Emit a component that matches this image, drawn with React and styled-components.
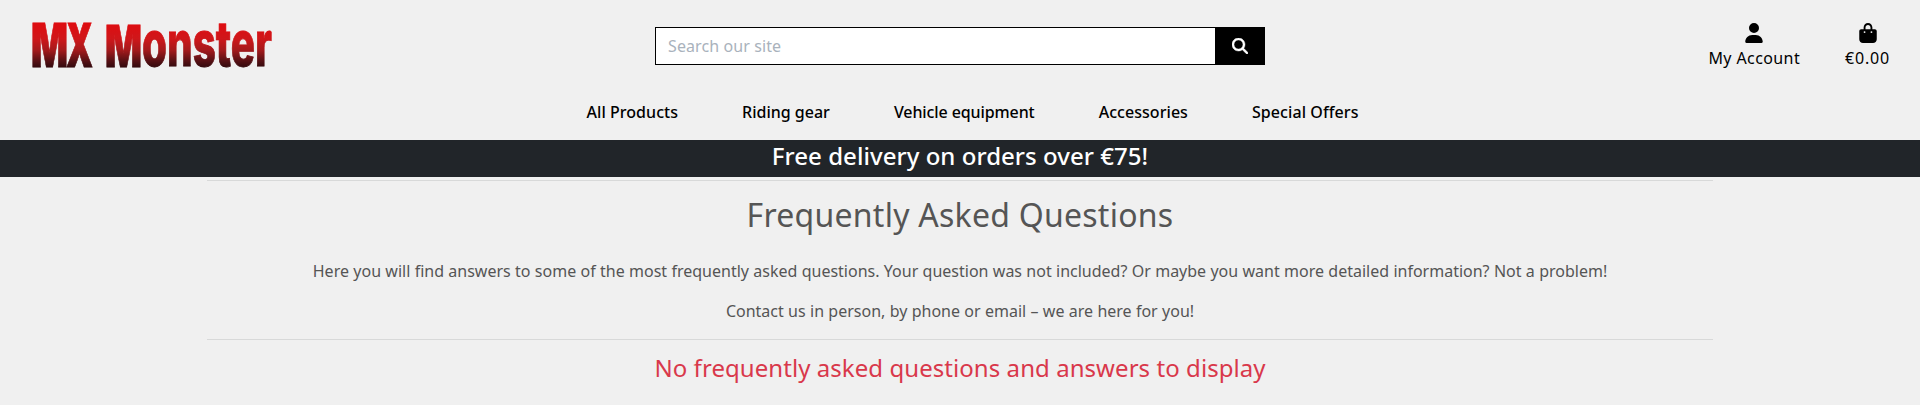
import React from 'react';
import styled, { createGlobalStyle } from 'styled-components';
import { FaUser, FaBagShopping, FaMagnifyingGlass } from 'react-icons/fa6';

const GlobalStyle = createGlobalStyle`
  *, *::before, *::after { box-sizing: border-box; }
  body {
    margin: 0;
    min-height: 405px;
    background: #f0f0f0;
    color: #000;
    font: 16px/24px "Noto Sans", sans-serif;
  }
`;

const TopBar = styled.header`
  display: grid;
  grid-template-columns: 655px 610px 1fr;
  height: 100px;
  padding-top: 22px;
`;

const LogoLink = styled.a`
  margin-left: 31px;
  svg { display: block; }
`;

const SearchForm = styled.form`
  display: flex;
  height: 38px;
  margin-top: 5px;
`;

const SearchInput = styled.input`
  flex: 1;
  min-width: 0;
  border: 1px solid #000;
  border-right: 0;
  border-radius: 0;
  padding: 0 12px;
  background: #fff;
  font: inherit;
  letter-spacing: 0.1px;
  outline: none;
  &::placeholder { color: #a9b2bc; opacity: 1; }
`;

const SearchButton = styled.button`
  display: flex;
  align-items: center;
  justify-content: center;
  width: 50px;
  border: 0;
  padding: 0;
  background: #000;
  color: #fff;
  font-size: 16px;
  svg { stroke: currentColor; stroke-width: 14px; }
`;

const Actions = styled.div`
  display: flex;
  justify-content: flex-end;
  gap: 45px;
  padding-right: 30px;
`;

const Action = styled.a`
  display: flex;
  flex-direction: column;
  align-items: center;
  letter-spacing: ${({ $spacing }) => $spacing}px;
  svg { width: 18px; height: 20px; margin: 1px 0 3px; }
`;

const Nav = styled.nav`
  display: flex;
  justify-content: center;
  gap: 64px;
  height: 40px;
  padding-left: 25px;
`;

const NavLink = styled.a`
  font-weight: 500;
  letter-spacing: ${({ $spacing }) => $spacing}px;
`;

const Banner = styled.div`
  height: 37px;
  background: #212529;
  color: #fff;
  font-size: 24px;
  font-weight: 500;
  line-height: 32px;
  letter-spacing: 0.04px;
  text-align: center;
`;

const Content = styled.main`
  width: 1506px;
  margin: 3px auto 0 207px;
  color: #555;
  text-align: center;
`;

const Rule = styled.hr`
  height: 1px;
  margin: 0;
  border: 0;
  background: #d8d9d9;
`;

const Title = styled.h1`
  margin: 15px 0 25px;
  font-size: 32px;
  font-weight: 400;
  line-height: 38px;
  letter-spacing: 0.25px;
`;

const Paragraph = styled.p`
  margin: 0 0 ${({ $gap }) => $gap}px;
  word-spacing: 0.17px;
`;

const EmptyNotice = styled.h2`
  margin: 13px 0 0;
  color: #d9384b;
  font-size: 24px;
  font-weight: 400;
  line-height: 29px;
  letter-spacing: 0.06px;
`;

const LINKS = [
  ['All Products', 0.05],
  ['Riding gear', 0],
  ['Vehicle equipment', -0.1],
  ['Accessories', 0.05],
  ['Special Offers', 0.08],
];

function Logo() {
  return (
    <svg width="244" height="48" viewBox="0 0 244 48" role="img" aria-label="MX Monster">
      <defs>
        <linearGradient id="fade" gradientUnits="userSpaceOnUse" x1="0" y1="1" x2="0" y2="46">
          <stop offset="0" stopColor="#df0c10" />
          <stop offset="0.35" stopColor="#cf171a" />
          <stop offset="0.6" stopColor="#a51a1c" />
          <stop offset="0.85" stopColor="#541014" />
          <stop offset="1" stopColor="#30090d" />
        </linearGradient>
        <mask id="letters" maskUnits="userSpaceOnUse" x="0" y="0" width="244" height="48">
          <g fill="#fff" stroke="#fff" strokeWidth="0.8" fontFamily="Inter, sans-serif" fontWeight="900">
            <text x="0" y="45" fontSize="60" textLength="37" lengthAdjust="spacingAndGlyphs">M</text>
            <text x="35" y="45" fontSize="60" textLength="27" lengthAdjust="spacingAndGlyphs">X</text>
            <text x="74" y="44.5" fontSize="58" textLength="37" lengthAdjust="spacingAndGlyphs">M</text>
            <text x="111" y="44" fontSize="63" fontWeight="800" textLength="130" lengthAdjust="spacingAndGlyphs">onster</text>
          </g>
        </mask>
      </defs>
      <rect width="244" height="48" fill="url(#fade)" mask="url(#letters)" />
    </svg>
  );
}

export default function App() {
  return (
    <>
      <GlobalStyle />
      <TopBar>
        <LogoLink><Logo /></LogoLink>
        <SearchForm>
          <SearchInput placeholder="Search our site" />
          <SearchButton type="button" aria-label="Search"><FaMagnifyingGlass /></SearchButton>
        </SearchForm>
        <Actions>
          <Action $spacing={0.4}><FaUser />My Account</Action>
          <Action $spacing={0.8}><FaBagShopping />€0.00</Action>
        </Actions>
      </TopBar>
      <Nav>
        {LINKS.map(([label, spacing]) => (
          <NavLink key={label} $spacing={spacing}>{label}</NavLink>
        ))}
      </Nav>
      <Banner>Free delivery on orders over €75!</Banner>
      <Content>
        <Rule />
        <Title>Frequently Asked Questions</Title>
        <Paragraph $gap={16}>
          Here you will find answers to some of the most frequently asked questions. Your question was not included? Or maybe you want more detailed information? Not a problem!
        </Paragraph>
        <Paragraph $gap={16}>Contact us in person, by phone or email – we are here for you!</Paragraph>
        <Rule />
        <EmptyNotice>No frequently asked questions and answers to display</EmptyNotice>
      </Content>
    </>
  );
}
